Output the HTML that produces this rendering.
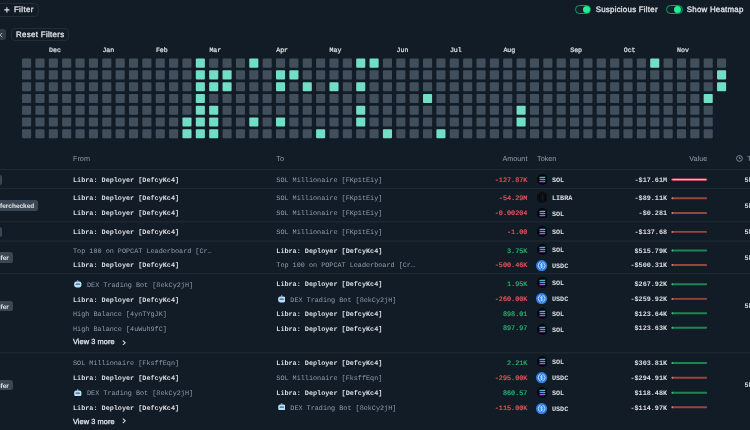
<!DOCTYPE html>
<html lang="en"><head><meta charset="utf-8"><title>Transfers</title>
<style>

html,body{margin:0;padding:0;}
body{text-rendering:geometricPrecision;width:750px;height:430px;overflow:hidden;background:#121c27;position:relative;font-family:"Liberation Sans",sans-serif;color:#e3e6ea;}
#root{position:absolute;left:0;top:0;width:750px;height:430px;filter:blur(0.32px);}
.a{position:absolute;white-space:nowrap;}
.m{font-family:"Liberation Mono",monospace;font-size:6.8px;line-height:10px;height:10px;}
.b{font-weight:bold;color:#e3e6ea;}
.m.b{color:#dadee3;}
.g{color:#929daa;}
.r{color:#f0595c;-webkit-text-stroke:0.18px #f0595c;}
.gr{color:#2db672;-webkit-text-stroke:0.18px #2db672;}
.s{font-family:"Liberation Sans",sans-serif;}
.c{position:absolute;width:9.1px;height:9.05px;border-radius:0.9px;background:#414f5d;}
.c.t{background:#72dec5;}
.hl{position:absolute;left:0;width:750px;height:1px;background:#212b36;}
.btn{position:absolute;box-sizing:border-box;border:1px solid #222d38;border-radius:4px;font-weight:bold;color:#e3e6ea;}
.tag{position:absolute;box-sizing:border-box;background:#3a4653;border-radius:2.5px;height:10.4px;line-height:10.4px;font-size:6.5px;font-weight:bold;color:#e3e6ea;white-space:nowrap;padding:0 4.1px;overflow:hidden;min-width:12px;}
.tg{position:absolute;box-sizing:border-box;width:16.3px;height:9.4px;border:1.2px solid #1b9a62;border-radius:5px;background:#14212a;}
.tg i{position:absolute;right:0.3px;top:-0.2px;width:7.4px;height:7.4px;border-radius:50%;background:#1ff096;}
.t1{font-size:7.9px;line-height:12px;font-weight:normal;-webkit-text-stroke:0.28px #e3e6ea;}
.bar{position:absolute;height:2.6px;border-radius:1.3px;width:35.8px;left:671.5px;}
.bar b{position:absolute;left:1px;right:1px;top:0.9px;height:0.8px;background:#fcc3c3;border-radius:1px;}
.ic{position:absolute;width:10.8px;height:10.8px;}

</style></head><body><div id="root">
<svg width="0" height="0" style="position:absolute"><defs><linearGradient id="s1" x1="0" y1="0" x2="1" y2="0"><stop offset="0" stop-color="#4a9fd0"/><stop offset="1" stop-color="#2fe3b0"/></linearGradient><linearGradient id="s2" x1="0" y1="0" x2="1" y2="0"><stop offset="0" stop-color="#8672ea"/><stop offset="1" stop-color="#56b4dc"/></linearGradient><linearGradient id="s3" x1="0" y1="0" x2="1" y2="0"><stop offset="0" stop-color="#a848f2"/><stop offset="1" stop-color="#747ce8"/></linearGradient></defs></svg>
<div class="btn" style="left:-6px;top:3.2px;width:44.5px;height:13.4px;border-radius:4.5px;"></div>
<svg class="a" style="left:4.1px;top:7px" width="5.8" height="5.8" viewBox="0 0 10 10"><path d="M5 0.600V9.400M0.600 5H9.400" stroke="#e3e6ea" stroke-width="1.900" fill="none"/></svg>
<div class="a s b t1" style="left:13.9px;top:4.3px;letter-spacing:0.4px;">Filter</div>
<div class="tg" style="left:575px;top:5px;"><i></i></div>
<div class="a s b t1" style="left:595.7px;top:4.2px;font-size:7.9px;letter-spacing:0.25px;">Suspicious Filter</div>
<div class="tg" style="left:666.4px;top:5px;"><i></i></div>
<div class="a s b t1" style="left:686.8px;top:4.2px;font-size:7.9px;letter-spacing:0.24px;">Show Heatmap</div>
<div class="a" style="left:-6px;top:28.6px;width:11.9px;height:11.9px;background:#2d3946;border-radius:3px;"></div>
<svg class="a" style="left:-3.1px;top:31.5px" width="6.2" height="6.2" viewBox="0 0 10 10"><path d="M1.500 1.500L8.500 8.500M8.500 1.500L1.500 8.500" stroke="#b4bdc7" stroke-width="1.500" fill="none"/></svg>
<div class="btn" style="left:11.2px;top:27.8px;width:58.1px;height:13.3px;"></div>
<div class="a s b t1" style="left:16.1px;top:29.3px;letter-spacing:0.31px;">Reset Filters</div>
<div class="a m" style="left:49.0px;top:46.4px;font-size:6.6px;color:#dde1e6;-webkit-text-stroke:0.22px #dde1e6;">Dec</div>
<div class="a m" style="left:102.4px;top:46.4px;font-size:6.6px;color:#dde1e6;-webkit-text-stroke:0.22px #dde1e6;">Jan</div>
<div class="a m" style="left:155.9px;top:46.4px;font-size:6.6px;color:#dde1e6;-webkit-text-stroke:0.22px #dde1e6;">Feb</div>
<div class="a m" style="left:209.4px;top:46.4px;font-size:6.6px;color:#dde1e6;-webkit-text-stroke:0.22px #dde1e6;">Mar</div>
<div class="a m" style="left:276.2px;top:46.4px;font-size:6.6px;color:#dde1e6;-webkit-text-stroke:0.22px #dde1e6;">Apr</div>
<div class="a m" style="left:329.6px;top:46.4px;font-size:6.6px;color:#dde1e6;-webkit-text-stroke:0.22px #dde1e6;">May</div>
<div class="a m" style="left:396.5px;top:46.4px;font-size:6.6px;color:#dde1e6;-webkit-text-stroke:0.22px #dde1e6;">Jun</div>
<div class="a m" style="left:449.9px;top:46.4px;font-size:6.6px;color:#dde1e6;-webkit-text-stroke:0.22px #dde1e6;">Jul</div>
<div class="a m" style="left:503.4px;top:46.4px;font-size:6.6px;color:#dde1e6;-webkit-text-stroke:0.22px #dde1e6;">Aug</div>
<div class="a m" style="left:570.2px;top:46.4px;font-size:6.6px;color:#dde1e6;-webkit-text-stroke:0.22px #dde1e6;">Sep</div>
<div class="a m" style="left:623.7px;top:46.4px;font-size:6.6px;color:#dde1e6;-webkit-text-stroke:0.22px #dde1e6;">Oct</div>
<div class="a m" style="left:677.1px;top:46.4px;font-size:6.6px;color:#dde1e6;-webkit-text-stroke:0.22px #dde1e6;">Nov</div>
<svg class="a" style="left:0;top:0" width="750" height="145" viewBox="0 0 750 145"><rect x="22.05" y="58.60" width="9.1" height="9.05" rx="0.9" fill="#414f5d"/><rect x="22.05" y="70.37" width="9.1" height="9.05" rx="0.9" fill="#414f5d"/><rect x="22.05" y="82.14" width="9.1" height="9.05" rx="0.9" fill="#414f5d"/><rect x="22.05" y="93.91" width="9.1" height="9.05" rx="0.9" fill="#414f5d"/><rect x="22.05" y="105.68" width="9.1" height="9.05" rx="0.9" fill="#414f5d"/><rect x="22.05" y="117.45" width="9.1" height="9.05" rx="0.9" fill="#414f5d"/><rect x="22.05" y="129.22" width="9.1" height="9.05" rx="0.9" fill="#414f5d"/><rect x="35.41" y="58.60" width="9.1" height="9.05" rx="0.9" fill="#414f5d"/><rect x="35.41" y="70.37" width="9.1" height="9.05" rx="0.9" fill="#414f5d"/><rect x="35.41" y="82.14" width="9.1" height="9.05" rx="0.9" fill="#414f5d"/><rect x="35.41" y="93.91" width="9.1" height="9.05" rx="0.9" fill="#414f5d"/><rect x="35.41" y="105.68" width="9.1" height="9.05" rx="0.9" fill="#414f5d"/><rect x="35.41" y="117.45" width="9.1" height="9.05" rx="0.9" fill="#414f5d"/><rect x="35.41" y="129.22" width="9.1" height="9.05" rx="0.9" fill="#414f5d"/><rect x="48.78" y="58.60" width="9.1" height="9.05" rx="0.9" fill="#414f5d"/><rect x="48.78" y="70.37" width="9.1" height="9.05" rx="0.9" fill="#414f5d"/><rect x="48.78" y="82.14" width="9.1" height="9.05" rx="0.9" fill="#414f5d"/><rect x="48.78" y="93.91" width="9.1" height="9.05" rx="0.9" fill="#414f5d"/><rect x="48.78" y="105.68" width="9.1" height="9.05" rx="0.9" fill="#414f5d"/><rect x="48.78" y="117.45" width="9.1" height="9.05" rx="0.9" fill="#414f5d"/><rect x="48.78" y="129.22" width="9.1" height="9.05" rx="0.9" fill="#414f5d"/><rect x="62.14" y="58.60" width="9.1" height="9.05" rx="0.9" fill="#414f5d"/><rect x="62.14" y="70.37" width="9.1" height="9.05" rx="0.9" fill="#414f5d"/><rect x="62.14" y="82.14" width="9.1" height="9.05" rx="0.9" fill="#414f5d"/><rect x="62.14" y="93.91" width="9.1" height="9.05" rx="0.9" fill="#414f5d"/><rect x="62.14" y="105.68" width="9.1" height="9.05" rx="0.9" fill="#414f5d"/><rect x="62.14" y="117.45" width="9.1" height="9.05" rx="0.9" fill="#414f5d"/><rect x="62.14" y="129.22" width="9.1" height="9.05" rx="0.9" fill="#414f5d"/><rect x="75.51" y="58.60" width="9.1" height="9.05" rx="0.9" fill="#414f5d"/><rect x="75.51" y="70.37" width="9.1" height="9.05" rx="0.9" fill="#414f5d"/><rect x="75.51" y="82.14" width="9.1" height="9.05" rx="0.9" fill="#414f5d"/><rect x="75.51" y="93.91" width="9.1" height="9.05" rx="0.9" fill="#414f5d"/><rect x="75.51" y="105.68" width="9.1" height="9.05" rx="0.9" fill="#414f5d"/><rect x="75.51" y="117.45" width="9.1" height="9.05" rx="0.9" fill="#414f5d"/><rect x="75.51" y="129.22" width="9.1" height="9.05" rx="0.9" fill="#414f5d"/><rect x="88.88" y="58.60" width="9.1" height="9.05" rx="0.9" fill="#414f5d"/><rect x="88.88" y="70.37" width="9.1" height="9.05" rx="0.9" fill="#414f5d"/><rect x="88.88" y="82.14" width="9.1" height="9.05" rx="0.9" fill="#414f5d"/><rect x="88.88" y="93.91" width="9.1" height="9.05" rx="0.9" fill="#414f5d"/><rect x="88.88" y="105.68" width="9.1" height="9.05" rx="0.9" fill="#414f5d"/><rect x="88.88" y="117.45" width="9.1" height="9.05" rx="0.9" fill="#414f5d"/><rect x="88.88" y="129.22" width="9.1" height="9.05" rx="0.9" fill="#414f5d"/><rect x="102.24" y="58.60" width="9.1" height="9.05" rx="0.9" fill="#414f5d"/><rect x="102.24" y="70.37" width="9.1" height="9.05" rx="0.9" fill="#414f5d"/><rect x="102.24" y="82.14" width="9.1" height="9.05" rx="0.9" fill="#414f5d"/><rect x="102.24" y="93.91" width="9.1" height="9.05" rx="0.9" fill="#414f5d"/><rect x="102.24" y="105.68" width="9.1" height="9.05" rx="0.9" fill="#414f5d"/><rect x="102.24" y="117.45" width="9.1" height="9.05" rx="0.9" fill="#414f5d"/><rect x="102.24" y="129.22" width="9.1" height="9.05" rx="0.9" fill="#414f5d"/><rect x="115.61" y="58.60" width="9.1" height="9.05" rx="0.9" fill="#414f5d"/><rect x="115.61" y="70.37" width="9.1" height="9.05" rx="0.9" fill="#414f5d"/><rect x="115.61" y="82.14" width="9.1" height="9.05" rx="0.9" fill="#414f5d"/><rect x="115.61" y="93.91" width="9.1" height="9.05" rx="0.9" fill="#414f5d"/><rect x="115.61" y="105.68" width="9.1" height="9.05" rx="0.9" fill="#414f5d"/><rect x="115.61" y="117.45" width="9.1" height="9.05" rx="0.9" fill="#414f5d"/><rect x="115.61" y="129.22" width="9.1" height="9.05" rx="0.9" fill="#414f5d"/><rect x="128.97" y="58.60" width="9.1" height="9.05" rx="0.9" fill="#414f5d"/><rect x="128.97" y="70.37" width="9.1" height="9.05" rx="0.9" fill="#414f5d"/><rect x="128.97" y="82.14" width="9.1" height="9.05" rx="0.9" fill="#414f5d"/><rect x="128.97" y="93.91" width="9.1" height="9.05" rx="0.9" fill="#414f5d"/><rect x="128.97" y="105.68" width="9.1" height="9.05" rx="0.9" fill="#414f5d"/><rect x="128.97" y="117.45" width="9.1" height="9.05" rx="0.9" fill="#414f5d"/><rect x="128.97" y="129.22" width="9.1" height="9.05" rx="0.9" fill="#414f5d"/><rect x="142.34" y="58.60" width="9.1" height="9.05" rx="0.9" fill="#414f5d"/><rect x="142.34" y="70.37" width="9.1" height="9.05" rx="0.9" fill="#414f5d"/><rect x="142.34" y="82.14" width="9.1" height="9.05" rx="0.9" fill="#414f5d"/><rect x="142.34" y="93.91" width="9.1" height="9.05" rx="0.9" fill="#414f5d"/><rect x="142.34" y="105.68" width="9.1" height="9.05" rx="0.9" fill="#414f5d"/><rect x="142.34" y="117.45" width="9.1" height="9.05" rx="0.9" fill="#414f5d"/><rect x="142.34" y="129.22" width="9.1" height="9.05" rx="0.9" fill="#414f5d"/><rect x="155.70" y="58.60" width="9.1" height="9.05" rx="0.9" fill="#414f5d"/><rect x="155.70" y="70.37" width="9.1" height="9.05" rx="0.9" fill="#414f5d"/><rect x="155.70" y="82.14" width="9.1" height="9.05" rx="0.9" fill="#414f5d"/><rect x="155.70" y="93.91" width="9.1" height="9.05" rx="0.9" fill="#414f5d"/><rect x="155.70" y="105.68" width="9.1" height="9.05" rx="0.9" fill="#414f5d"/><rect x="155.70" y="117.45" width="9.1" height="9.05" rx="0.9" fill="#414f5d"/><rect x="155.70" y="129.22" width="9.1" height="9.05" rx="0.9" fill="#414f5d"/><rect x="169.07" y="58.60" width="9.1" height="9.05" rx="0.9" fill="#414f5d"/><rect x="169.07" y="70.37" width="9.1" height="9.05" rx="0.9" fill="#414f5d"/><rect x="169.07" y="82.14" width="9.1" height="9.05" rx="0.9" fill="#414f5d"/><rect x="169.07" y="93.91" width="9.1" height="9.05" rx="0.9" fill="#414f5d"/><rect x="169.07" y="105.68" width="9.1" height="9.05" rx="0.9" fill="#414f5d"/><rect x="169.07" y="117.45" width="9.1" height="9.05" rx="0.9" fill="#414f5d"/><rect x="169.07" y="129.22" width="9.1" height="9.05" rx="0.9" fill="#414f5d"/><rect x="182.43" y="58.60" width="9.1" height="9.05" rx="0.9" fill="#414f5d"/><rect x="182.43" y="70.37" width="9.1" height="9.05" rx="0.9" fill="#414f5d"/><rect x="182.43" y="82.14" width="9.1" height="9.05" rx="0.9" fill="#414f5d"/><rect x="182.43" y="93.91" width="9.1" height="9.05" rx="0.9" fill="#414f5d"/><rect x="182.43" y="105.68" width="9.1" height="9.05" rx="0.9" fill="#414f5d"/><rect x="182.43" y="117.45" width="9.1" height="9.05" rx="0.9" fill="#72dec5"/><rect x="182.43" y="129.22" width="9.1" height="9.05" rx="0.9" fill="#72dec5"/><rect x="195.80" y="58.60" width="9.1" height="9.05" rx="0.9" fill="#72dec5"/><rect x="195.80" y="70.37" width="9.1" height="9.05" rx="0.9" fill="#72dec5"/><rect x="195.80" y="82.14" width="9.1" height="9.05" rx="0.9" fill="#72dec5"/><rect x="195.80" y="93.91" width="9.1" height="9.05" rx="0.9" fill="#72dec5"/><rect x="195.80" y="105.68" width="9.1" height="9.05" rx="0.9" fill="#72dec5"/><rect x="195.80" y="117.45" width="9.1" height="9.05" rx="0.9" fill="#72dec5"/><rect x="195.80" y="129.22" width="9.1" height="9.05" rx="0.9" fill="#72dec5"/><rect x="209.16" y="58.60" width="9.1" height="9.05" rx="0.9" fill="#414f5d"/><rect x="209.16" y="70.37" width="9.1" height="9.05" rx="0.9" fill="#72dec5"/><rect x="209.16" y="82.14" width="9.1" height="9.05" rx="0.9" fill="#72dec5"/><rect x="209.16" y="93.91" width="9.1" height="9.05" rx="0.9" fill="#414f5d"/><rect x="209.16" y="105.68" width="9.1" height="9.05" rx="0.9" fill="#72dec5"/><rect x="209.16" y="117.45" width="9.1" height="9.05" rx="0.9" fill="#72dec5"/><rect x="209.16" y="129.22" width="9.1" height="9.05" rx="0.9" fill="#72dec5"/><rect x="222.53" y="58.60" width="9.1" height="9.05" rx="0.9" fill="#414f5d"/><rect x="222.53" y="70.37" width="9.1" height="9.05" rx="0.9" fill="#72dec5"/><rect x="222.53" y="82.14" width="9.1" height="9.05" rx="0.9" fill="#72dec5"/><rect x="222.53" y="93.91" width="9.1" height="9.05" rx="0.9" fill="#414f5d"/><rect x="222.53" y="105.68" width="9.1" height="9.05" rx="0.9" fill="#414f5d"/><rect x="222.53" y="117.45" width="9.1" height="9.05" rx="0.9" fill="#414f5d"/><rect x="222.53" y="129.22" width="9.1" height="9.05" rx="0.9" fill="#414f5d"/><rect x="235.89" y="58.60" width="9.1" height="9.05" rx="0.9" fill="#414f5d"/><rect x="235.89" y="70.37" width="9.1" height="9.05" rx="0.9" fill="#414f5d"/><rect x="235.89" y="82.14" width="9.1" height="9.05" rx="0.9" fill="#414f5d"/><rect x="235.89" y="93.91" width="9.1" height="9.05" rx="0.9" fill="#414f5d"/><rect x="235.89" y="105.68" width="9.1" height="9.05" rx="0.9" fill="#414f5d"/><rect x="235.89" y="117.45" width="9.1" height="9.05" rx="0.9" fill="#414f5d"/><rect x="235.89" y="129.22" width="9.1" height="9.05" rx="0.9" fill="#414f5d"/><rect x="249.26" y="58.60" width="9.1" height="9.05" rx="0.9" fill="#72dec5"/><rect x="249.26" y="70.37" width="9.1" height="9.05" rx="0.9" fill="#414f5d"/><rect x="249.26" y="82.14" width="9.1" height="9.05" rx="0.9" fill="#414f5d"/><rect x="249.26" y="93.91" width="9.1" height="9.05" rx="0.9" fill="#414f5d"/><rect x="249.26" y="105.68" width="9.1" height="9.05" rx="0.9" fill="#414f5d"/><rect x="249.26" y="117.45" width="9.1" height="9.05" rx="0.9" fill="#72dec5"/><rect x="249.26" y="129.22" width="9.1" height="9.05" rx="0.9" fill="#414f5d"/><rect x="262.62" y="58.60" width="9.1" height="9.05" rx="0.9" fill="#414f5d"/><rect x="262.62" y="70.37" width="9.1" height="9.05" rx="0.9" fill="#414f5d"/><rect x="262.62" y="82.14" width="9.1" height="9.05" rx="0.9" fill="#414f5d"/><rect x="262.62" y="93.91" width="9.1" height="9.05" rx="0.9" fill="#414f5d"/><rect x="262.62" y="105.68" width="9.1" height="9.05" rx="0.9" fill="#414f5d"/><rect x="262.62" y="117.45" width="9.1" height="9.05" rx="0.9" fill="#414f5d"/><rect x="262.62" y="129.22" width="9.1" height="9.05" rx="0.9" fill="#414f5d"/><rect x="275.99" y="58.60" width="9.1" height="9.05" rx="0.9" fill="#414f5d"/><rect x="275.99" y="70.37" width="9.1" height="9.05" rx="0.9" fill="#72dec5"/><rect x="275.99" y="82.14" width="9.1" height="9.05" rx="0.9" fill="#72dec5"/><rect x="275.99" y="93.91" width="9.1" height="9.05" rx="0.9" fill="#414f5d"/><rect x="275.99" y="105.68" width="9.1" height="9.05" rx="0.9" fill="#414f5d"/><rect x="275.99" y="117.45" width="9.1" height="9.05" rx="0.9" fill="#72dec5"/><rect x="275.99" y="129.22" width="9.1" height="9.05" rx="0.9" fill="#414f5d"/><rect x="289.35" y="58.60" width="9.1" height="9.05" rx="0.9" fill="#414f5d"/><rect x="289.35" y="70.37" width="9.1" height="9.05" rx="0.9" fill="#72dec5"/><rect x="289.35" y="82.14" width="9.1" height="9.05" rx="0.9" fill="#414f5d"/><rect x="289.35" y="93.91" width="9.1" height="9.05" rx="0.9" fill="#414f5d"/><rect x="289.35" y="105.68" width="9.1" height="9.05" rx="0.9" fill="#414f5d"/><rect x="289.35" y="117.45" width="9.1" height="9.05" rx="0.9" fill="#414f5d"/><rect x="289.35" y="129.22" width="9.1" height="9.05" rx="0.9" fill="#414f5d"/><rect x="302.72" y="58.60" width="9.1" height="9.05" rx="0.9" fill="#414f5d"/><rect x="302.72" y="70.37" width="9.1" height="9.05" rx="0.9" fill="#414f5d"/><rect x="302.72" y="82.14" width="9.1" height="9.05" rx="0.9" fill="#72dec5"/><rect x="302.72" y="93.91" width="9.1" height="9.05" rx="0.9" fill="#414f5d"/><rect x="302.72" y="105.68" width="9.1" height="9.05" rx="0.9" fill="#414f5d"/><rect x="302.72" y="117.45" width="9.1" height="9.05" rx="0.9" fill="#414f5d"/><rect x="302.72" y="129.22" width="9.1" height="9.05" rx="0.9" fill="#414f5d"/><rect x="316.08" y="58.60" width="9.1" height="9.05" rx="0.9" fill="#414f5d"/><rect x="316.08" y="70.37" width="9.1" height="9.05" rx="0.9" fill="#414f5d"/><rect x="316.08" y="82.14" width="9.1" height="9.05" rx="0.9" fill="#414f5d"/><rect x="316.08" y="93.91" width="9.1" height="9.05" rx="0.9" fill="#414f5d"/><rect x="316.08" y="105.68" width="9.1" height="9.05" rx="0.9" fill="#414f5d"/><rect x="316.08" y="117.45" width="9.1" height="9.05" rx="0.9" fill="#414f5d"/><rect x="316.08" y="129.22" width="9.1" height="9.05" rx="0.9" fill="#72dec5"/><rect x="329.44" y="58.60" width="9.1" height="9.05" rx="0.9" fill="#414f5d"/><rect x="329.44" y="70.37" width="9.1" height="9.05" rx="0.9" fill="#414f5d"/><rect x="329.44" y="82.14" width="9.1" height="9.05" rx="0.9" fill="#72dec5"/><rect x="329.44" y="93.91" width="9.1" height="9.05" rx="0.9" fill="#414f5d"/><rect x="329.44" y="105.68" width="9.1" height="9.05" rx="0.9" fill="#414f5d"/><rect x="329.44" y="117.45" width="9.1" height="9.05" rx="0.9" fill="#414f5d"/><rect x="329.44" y="129.22" width="9.1" height="9.05" rx="0.9" fill="#414f5d"/><rect x="342.81" y="58.60" width="9.1" height="9.05" rx="0.9" fill="#414f5d"/><rect x="342.81" y="70.37" width="9.1" height="9.05" rx="0.9" fill="#414f5d"/><rect x="342.81" y="82.14" width="9.1" height="9.05" rx="0.9" fill="#414f5d"/><rect x="342.81" y="93.91" width="9.1" height="9.05" rx="0.9" fill="#414f5d"/><rect x="342.81" y="105.68" width="9.1" height="9.05" rx="0.9" fill="#414f5d"/><rect x="342.81" y="117.45" width="9.1" height="9.05" rx="0.9" fill="#414f5d"/><rect x="342.81" y="129.22" width="9.1" height="9.05" rx="0.9" fill="#414f5d"/><rect x="356.18" y="58.60" width="9.1" height="9.05" rx="0.9" fill="#72dec5"/><rect x="356.18" y="70.37" width="9.1" height="9.05" rx="0.9" fill="#414f5d"/><rect x="356.18" y="82.14" width="9.1" height="9.05" rx="0.9" fill="#72dec5"/><rect x="356.18" y="93.91" width="9.1" height="9.05" rx="0.9" fill="#414f5d"/><rect x="356.18" y="105.68" width="9.1" height="9.05" rx="0.9" fill="#72dec5"/><rect x="356.18" y="117.45" width="9.1" height="9.05" rx="0.9" fill="#72dec5"/><rect x="356.18" y="129.22" width="9.1" height="9.05" rx="0.9" fill="#414f5d"/><rect x="369.54" y="58.60" width="9.1" height="9.05" rx="0.9" fill="#72dec5"/><rect x="369.54" y="70.37" width="9.1" height="9.05" rx="0.9" fill="#414f5d"/><rect x="369.54" y="82.14" width="9.1" height="9.05" rx="0.9" fill="#414f5d"/><rect x="369.54" y="93.91" width="9.1" height="9.05" rx="0.9" fill="#414f5d"/><rect x="369.54" y="105.68" width="9.1" height="9.05" rx="0.9" fill="#414f5d"/><rect x="369.54" y="117.45" width="9.1" height="9.05" rx="0.9" fill="#414f5d"/><rect x="369.54" y="129.22" width="9.1" height="9.05" rx="0.9" fill="#414f5d"/><rect x="382.91" y="58.60" width="9.1" height="9.05" rx="0.9" fill="#414f5d"/><rect x="382.91" y="70.37" width="9.1" height="9.05" rx="0.9" fill="#414f5d"/><rect x="382.91" y="82.14" width="9.1" height="9.05" rx="0.9" fill="#414f5d"/><rect x="382.91" y="93.91" width="9.1" height="9.05" rx="0.9" fill="#414f5d"/><rect x="382.91" y="105.68" width="9.1" height="9.05" rx="0.9" fill="#414f5d"/><rect x="382.91" y="117.45" width="9.1" height="9.05" rx="0.9" fill="#414f5d"/><rect x="382.91" y="129.22" width="9.1" height="9.05" rx="0.9" fill="#72dec5"/><rect x="396.27" y="58.60" width="9.1" height="9.05" rx="0.9" fill="#414f5d"/><rect x="396.27" y="70.37" width="9.1" height="9.05" rx="0.9" fill="#414f5d"/><rect x="396.27" y="82.14" width="9.1" height="9.05" rx="0.9" fill="#414f5d"/><rect x="396.27" y="93.91" width="9.1" height="9.05" rx="0.9" fill="#414f5d"/><rect x="396.27" y="105.68" width="9.1" height="9.05" rx="0.9" fill="#414f5d"/><rect x="396.27" y="117.45" width="9.1" height="9.05" rx="0.9" fill="#414f5d"/><rect x="396.27" y="129.22" width="9.1" height="9.05" rx="0.9" fill="#414f5d"/><rect x="409.63" y="58.60" width="9.1" height="9.05" rx="0.9" fill="#414f5d"/><rect x="409.63" y="70.37" width="9.1" height="9.05" rx="0.9" fill="#414f5d"/><rect x="409.63" y="82.14" width="9.1" height="9.05" rx="0.9" fill="#414f5d"/><rect x="409.63" y="93.91" width="9.1" height="9.05" rx="0.9" fill="#414f5d"/><rect x="409.63" y="105.68" width="9.1" height="9.05" rx="0.9" fill="#414f5d"/><rect x="409.63" y="117.45" width="9.1" height="9.05" rx="0.9" fill="#414f5d"/><rect x="409.63" y="129.22" width="9.1" height="9.05" rx="0.9" fill="#414f5d"/><rect x="423.00" y="58.60" width="9.1" height="9.05" rx="0.9" fill="#414f5d"/><rect x="423.00" y="70.37" width="9.1" height="9.05" rx="0.9" fill="#414f5d"/><rect x="423.00" y="82.14" width="9.1" height="9.05" rx="0.9" fill="#414f5d"/><rect x="423.00" y="93.91" width="9.1" height="9.05" rx="0.9" fill="#72dec5"/><rect x="423.00" y="105.68" width="9.1" height="9.05" rx="0.9" fill="#414f5d"/><rect x="423.00" y="117.45" width="9.1" height="9.05" rx="0.9" fill="#414f5d"/><rect x="423.00" y="129.22" width="9.1" height="9.05" rx="0.9" fill="#414f5d"/><rect x="436.37" y="58.60" width="9.1" height="9.05" rx="0.9" fill="#414f5d"/><rect x="436.37" y="70.37" width="9.1" height="9.05" rx="0.9" fill="#414f5d"/><rect x="436.37" y="82.14" width="9.1" height="9.05" rx="0.9" fill="#414f5d"/><rect x="436.37" y="93.91" width="9.1" height="9.05" rx="0.9" fill="#414f5d"/><rect x="436.37" y="105.68" width="9.1" height="9.05" rx="0.9" fill="#414f5d"/><rect x="436.37" y="117.45" width="9.1" height="9.05" rx="0.9" fill="#414f5d"/><rect x="436.37" y="129.22" width="9.1" height="9.05" rx="0.9" fill="#72dec5"/><rect x="449.73" y="58.60" width="9.1" height="9.05" rx="0.9" fill="#414f5d"/><rect x="449.73" y="70.37" width="9.1" height="9.05" rx="0.9" fill="#414f5d"/><rect x="449.73" y="82.14" width="9.1" height="9.05" rx="0.9" fill="#414f5d"/><rect x="449.73" y="93.91" width="9.1" height="9.05" rx="0.9" fill="#414f5d"/><rect x="449.73" y="105.68" width="9.1" height="9.05" rx="0.9" fill="#414f5d"/><rect x="449.73" y="117.45" width="9.1" height="9.05" rx="0.9" fill="#414f5d"/><rect x="449.73" y="129.22" width="9.1" height="9.05" rx="0.9" fill="#414f5d"/><rect x="463.10" y="58.60" width="9.1" height="9.05" rx="0.9" fill="#414f5d"/><rect x="463.10" y="70.37" width="9.1" height="9.05" rx="0.9" fill="#414f5d"/><rect x="463.10" y="82.14" width="9.1" height="9.05" rx="0.9" fill="#414f5d"/><rect x="463.10" y="93.91" width="9.1" height="9.05" rx="0.9" fill="#414f5d"/><rect x="463.10" y="105.68" width="9.1" height="9.05" rx="0.9" fill="#414f5d"/><rect x="463.10" y="117.45" width="9.1" height="9.05" rx="0.9" fill="#414f5d"/><rect x="463.10" y="129.22" width="9.1" height="9.05" rx="0.9" fill="#414f5d"/><rect x="476.46" y="58.60" width="9.1" height="9.05" rx="0.9" fill="#414f5d"/><rect x="476.46" y="70.37" width="9.1" height="9.05" rx="0.9" fill="#414f5d"/><rect x="476.46" y="82.14" width="9.1" height="9.05" rx="0.9" fill="#414f5d"/><rect x="476.46" y="93.91" width="9.1" height="9.05" rx="0.9" fill="#414f5d"/><rect x="476.46" y="105.68" width="9.1" height="9.05" rx="0.9" fill="#414f5d"/><rect x="476.46" y="117.45" width="9.1" height="9.05" rx="0.9" fill="#414f5d"/><rect x="476.46" y="129.22" width="9.1" height="9.05" rx="0.9" fill="#414f5d"/><rect x="489.83" y="58.60" width="9.1" height="9.05" rx="0.9" fill="#414f5d"/><rect x="489.83" y="70.37" width="9.1" height="9.05" rx="0.9" fill="#414f5d"/><rect x="489.83" y="82.14" width="9.1" height="9.05" rx="0.9" fill="#414f5d"/><rect x="489.83" y="93.91" width="9.1" height="9.05" rx="0.9" fill="#414f5d"/><rect x="489.83" y="105.68" width="9.1" height="9.05" rx="0.9" fill="#414f5d"/><rect x="489.83" y="117.45" width="9.1" height="9.05" rx="0.9" fill="#414f5d"/><rect x="489.83" y="129.22" width="9.1" height="9.05" rx="0.9" fill="#414f5d"/><rect x="503.19" y="58.60" width="9.1" height="9.05" rx="0.9" fill="#414f5d"/><rect x="503.19" y="70.37" width="9.1" height="9.05" rx="0.9" fill="#414f5d"/><rect x="503.19" y="82.14" width="9.1" height="9.05" rx="0.9" fill="#414f5d"/><rect x="503.19" y="93.91" width="9.1" height="9.05" rx="0.9" fill="#414f5d"/><rect x="503.19" y="105.68" width="9.1" height="9.05" rx="0.9" fill="#414f5d"/><rect x="503.19" y="117.45" width="9.1" height="9.05" rx="0.9" fill="#414f5d"/><rect x="503.19" y="129.22" width="9.1" height="9.05" rx="0.9" fill="#414f5d"/><rect x="516.55" y="58.60" width="9.1" height="9.05" rx="0.9" fill="#414f5d"/><rect x="516.55" y="70.37" width="9.1" height="9.05" rx="0.9" fill="#414f5d"/><rect x="516.55" y="82.14" width="9.1" height="9.05" rx="0.9" fill="#414f5d"/><rect x="516.55" y="93.91" width="9.1" height="9.05" rx="0.9" fill="#414f5d"/><rect x="516.55" y="105.68" width="9.1" height="9.05" rx="0.9" fill="#72dec5"/><rect x="516.55" y="117.45" width="9.1" height="9.05" rx="0.9" fill="#72dec5"/><rect x="516.55" y="129.22" width="9.1" height="9.05" rx="0.9" fill="#414f5d"/><rect x="529.92" y="58.60" width="9.1" height="9.05" rx="0.9" fill="#414f5d"/><rect x="529.92" y="70.37" width="9.1" height="9.05" rx="0.9" fill="#414f5d"/><rect x="529.92" y="82.14" width="9.1" height="9.05" rx="0.9" fill="#414f5d"/><rect x="529.92" y="93.91" width="9.1" height="9.05" rx="0.9" fill="#414f5d"/><rect x="529.92" y="105.68" width="9.1" height="9.05" rx="0.9" fill="#414f5d"/><rect x="529.92" y="117.45" width="9.1" height="9.05" rx="0.9" fill="#414f5d"/><rect x="529.92" y="129.22" width="9.1" height="9.05" rx="0.9" fill="#414f5d"/><rect x="543.28" y="58.60" width="9.1" height="9.05" rx="0.9" fill="#414f5d"/><rect x="543.28" y="70.37" width="9.1" height="9.05" rx="0.9" fill="#414f5d"/><rect x="543.28" y="82.14" width="9.1" height="9.05" rx="0.9" fill="#414f5d"/><rect x="543.28" y="93.91" width="9.1" height="9.05" rx="0.9" fill="#414f5d"/><rect x="543.28" y="105.68" width="9.1" height="9.05" rx="0.9" fill="#414f5d"/><rect x="543.28" y="117.45" width="9.1" height="9.05" rx="0.9" fill="#414f5d"/><rect x="543.28" y="129.22" width="9.1" height="9.05" rx="0.9" fill="#414f5d"/><rect x="556.65" y="58.60" width="9.1" height="9.05" rx="0.9" fill="#414f5d"/><rect x="556.65" y="70.37" width="9.1" height="9.05" rx="0.9" fill="#414f5d"/><rect x="556.65" y="82.14" width="9.1" height="9.05" rx="0.9" fill="#414f5d"/><rect x="556.65" y="93.91" width="9.1" height="9.05" rx="0.9" fill="#414f5d"/><rect x="556.65" y="105.68" width="9.1" height="9.05" rx="0.9" fill="#414f5d"/><rect x="556.65" y="117.45" width="9.1" height="9.05" rx="0.9" fill="#414f5d"/><rect x="556.65" y="129.22" width="9.1" height="9.05" rx="0.9" fill="#414f5d"/><rect x="570.01" y="58.60" width="9.1" height="9.05" rx="0.9" fill="#414f5d"/><rect x="570.01" y="70.37" width="9.1" height="9.05" rx="0.9" fill="#414f5d"/><rect x="570.01" y="82.14" width="9.1" height="9.05" rx="0.9" fill="#414f5d"/><rect x="570.01" y="93.91" width="9.1" height="9.05" rx="0.9" fill="#414f5d"/><rect x="570.01" y="105.68" width="9.1" height="9.05" rx="0.9" fill="#414f5d"/><rect x="570.01" y="117.45" width="9.1" height="9.05" rx="0.9" fill="#414f5d"/><rect x="570.01" y="129.22" width="9.1" height="9.05" rx="0.9" fill="#414f5d"/><rect x="583.38" y="58.60" width="9.1" height="9.05" rx="0.9" fill="#414f5d"/><rect x="583.38" y="70.37" width="9.1" height="9.05" rx="0.9" fill="#414f5d"/><rect x="583.38" y="82.14" width="9.1" height="9.05" rx="0.9" fill="#414f5d"/><rect x="583.38" y="93.91" width="9.1" height="9.05" rx="0.9" fill="#414f5d"/><rect x="583.38" y="105.68" width="9.1" height="9.05" rx="0.9" fill="#414f5d"/><rect x="583.38" y="117.45" width="9.1" height="9.05" rx="0.9" fill="#414f5d"/><rect x="583.38" y="129.22" width="9.1" height="9.05" rx="0.9" fill="#414f5d"/><rect x="596.75" y="58.60" width="9.1" height="9.05" rx="0.9" fill="#414f5d"/><rect x="596.75" y="70.37" width="9.1" height="9.05" rx="0.9" fill="#414f5d"/><rect x="596.75" y="82.14" width="9.1" height="9.05" rx="0.9" fill="#414f5d"/><rect x="596.75" y="93.91" width="9.1" height="9.05" rx="0.9" fill="#414f5d"/><rect x="596.75" y="105.68" width="9.1" height="9.05" rx="0.9" fill="#414f5d"/><rect x="596.75" y="117.45" width="9.1" height="9.05" rx="0.9" fill="#414f5d"/><rect x="596.75" y="129.22" width="9.1" height="9.05" rx="0.9" fill="#414f5d"/><rect x="610.11" y="58.60" width="9.1" height="9.05" rx="0.9" fill="#414f5d"/><rect x="610.11" y="70.37" width="9.1" height="9.05" rx="0.9" fill="#414f5d"/><rect x="610.11" y="82.14" width="9.1" height="9.05" rx="0.9" fill="#414f5d"/><rect x="610.11" y="93.91" width="9.1" height="9.05" rx="0.9" fill="#414f5d"/><rect x="610.11" y="105.68" width="9.1" height="9.05" rx="0.9" fill="#414f5d"/><rect x="610.11" y="117.45" width="9.1" height="9.05" rx="0.9" fill="#414f5d"/><rect x="610.11" y="129.22" width="9.1" height="9.05" rx="0.9" fill="#414f5d"/><rect x="623.47" y="58.60" width="9.1" height="9.05" rx="0.9" fill="#414f5d"/><rect x="623.47" y="70.37" width="9.1" height="9.05" rx="0.9" fill="#414f5d"/><rect x="623.47" y="82.14" width="9.1" height="9.05" rx="0.9" fill="#414f5d"/><rect x="623.47" y="93.91" width="9.1" height="9.05" rx="0.9" fill="#414f5d"/><rect x="623.47" y="105.68" width="9.1" height="9.05" rx="0.9" fill="#414f5d"/><rect x="623.47" y="117.45" width="9.1" height="9.05" rx="0.9" fill="#414f5d"/><rect x="623.47" y="129.22" width="9.1" height="9.05" rx="0.9" fill="#414f5d"/><rect x="636.84" y="58.60" width="9.1" height="9.05" rx="0.9" fill="#414f5d"/><rect x="636.84" y="70.37" width="9.1" height="9.05" rx="0.9" fill="#414f5d"/><rect x="636.84" y="82.14" width="9.1" height="9.05" rx="0.9" fill="#414f5d"/><rect x="636.84" y="93.91" width="9.1" height="9.05" rx="0.9" fill="#414f5d"/><rect x="636.84" y="105.68" width="9.1" height="9.05" rx="0.9" fill="#414f5d"/><rect x="636.84" y="117.45" width="9.1" height="9.05" rx="0.9" fill="#414f5d"/><rect x="636.84" y="129.22" width="9.1" height="9.05" rx="0.9" fill="#414f5d"/><rect x="650.20" y="58.60" width="9.1" height="9.05" rx="0.9" fill="#72dec5"/><rect x="650.20" y="70.37" width="9.1" height="9.05" rx="0.9" fill="#414f5d"/><rect x="650.20" y="82.14" width="9.1" height="9.05" rx="0.9" fill="#414f5d"/><rect x="650.20" y="93.91" width="9.1" height="9.05" rx="0.9" fill="#414f5d"/><rect x="650.20" y="105.68" width="9.1" height="9.05" rx="0.9" fill="#414f5d"/><rect x="650.20" y="117.45" width="9.1" height="9.05" rx="0.9" fill="#414f5d"/><rect x="650.20" y="129.22" width="9.1" height="9.05" rx="0.9" fill="#414f5d"/><rect x="663.57" y="58.60" width="9.1" height="9.05" rx="0.9" fill="#414f5d"/><rect x="663.57" y="70.37" width="9.1" height="9.05" rx="0.9" fill="#414f5d"/><rect x="663.57" y="82.14" width="9.1" height="9.05" rx="0.9" fill="#414f5d"/><rect x="663.57" y="93.91" width="9.1" height="9.05" rx="0.9" fill="#414f5d"/><rect x="663.57" y="105.68" width="9.1" height="9.05" rx="0.9" fill="#414f5d"/><rect x="663.57" y="117.45" width="9.1" height="9.05" rx="0.9" fill="#414f5d"/><rect x="663.57" y="129.22" width="9.1" height="9.05" rx="0.9" fill="#414f5d"/><rect x="676.93" y="58.60" width="9.1" height="9.05" rx="0.9" fill="#414f5d"/><rect x="676.93" y="70.37" width="9.1" height="9.05" rx="0.9" fill="#414f5d"/><rect x="676.93" y="82.14" width="9.1" height="9.05" rx="0.9" fill="#414f5d"/><rect x="676.93" y="93.91" width="9.1" height="9.05" rx="0.9" fill="#414f5d"/><rect x="676.93" y="105.68" width="9.1" height="9.05" rx="0.9" fill="#414f5d"/><rect x="676.93" y="117.45" width="9.1" height="9.05" rx="0.9" fill="#414f5d"/><rect x="676.93" y="129.22" width="9.1" height="9.05" rx="0.9" fill="#414f5d"/><rect x="690.30" y="58.60" width="9.1" height="9.05" rx="0.9" fill="#414f5d"/><rect x="690.30" y="70.37" width="9.1" height="9.05" rx="0.9" fill="#414f5d"/><rect x="690.30" y="82.14" width="9.1" height="9.05" rx="0.9" fill="#414f5d"/><rect x="690.30" y="93.91" width="9.1" height="9.05" rx="0.9" fill="#414f5d"/><rect x="690.30" y="105.68" width="9.1" height="9.05" rx="0.9" fill="#414f5d"/><rect x="690.30" y="117.45" width="9.1" height="9.05" rx="0.9" fill="#414f5d"/><rect x="690.30" y="129.22" width="9.1" height="9.05" rx="0.9" fill="#414f5d"/><rect x="703.66" y="58.60" width="9.1" height="9.05" rx="0.9" fill="#414f5d"/><rect x="703.66" y="70.37" width="9.1" height="9.05" rx="0.9" fill="#414f5d"/><rect x="703.66" y="82.14" width="9.1" height="9.05" rx="0.9" fill="#414f5d"/><rect x="703.66" y="93.91" width="9.1" height="9.05" rx="0.9" fill="#72dec5"/><rect x="703.66" y="105.68" width="9.1" height="9.05" rx="0.9" fill="#414f5d"/><rect x="703.66" y="117.45" width="9.1" height="9.05" rx="0.9" fill="#414f5d"/><rect x="703.66" y="129.22" width="9.1" height="9.05" rx="0.9" fill="#414f5d"/><rect x="717.03" y="58.60" width="9.1" height="9.05" rx="0.9" fill="#414f5d"/><rect x="717.03" y="70.37" width="9.1" height="9.05" rx="0.9" fill="#72dec5"/><rect x="717.03" y="82.14" width="9.1" height="9.05" rx="0.9" fill="#72dec5"/></svg>
<div class="a s g" style="left:73px;top:154.2px;font-size:7.25px;line-height:10px;">From</div>
<div class="a s g" style="left:276.3px;top:154.2px;font-size:7.25px;line-height:10px;">To</div>
<div class="a s g" style="right:222.60000000000002px;top:154.2px;font-size:7.25px;line-height:10px;">Amount</div>
<div class="a s g" style="left:537px;top:154.2px;font-size:7.25px;line-height:10px;">Token</div>
<div class="a s g" style="right:42.700000000000045px;top:154.2px;font-size:7.25px;line-height:10px;">Value</div>
<svg class="a" style="left:735.9px;top:154.7px;" width="6.9" height="6.9" viewBox="0 0 10 10"><circle cx="5" cy="5" r="4.2" fill="none" stroke="#929daa" stroke-width="1.2"/><path d="M5 2.6V5.2H7" fill="none" stroke="#929daa" stroke-width="1.1"/></svg>
<div class="a s g" style="left:747.1px;top:154.2px;font-size:7.25px;line-height:10px;">Time</div>
<div class="hl" style="top:169px;background:#202a35"></div>
<div class="hl" style="top:170px;background:#131d28"></div>
<div class="hl" style="top:188px;background:#212b36"></div>
<div class="hl" style="top:221px;background:#1c2631"></div>
<div class="hl" style="top:222px;background:#17212c"></div>
<div class="hl" style="top:240px;background:#1a242e"></div>
<div class="hl" style="top:241px;background:#1a242e"></div>
<div class="hl" style="top:273px;background:#1f2934"></div>
<div class="hl" style="top:274px;background:#141e29"></div>
<div class="hl" style="top:352px;background:#1c2631"></div>
<div class="hl" style="top:353px;background:#17212c"></div>
<div class="a m b" style="left:73.0px;top:176.2px">Libra: Deployer [DefcyKc4]</div>
<div class="a m g" style="left:276.3px;top:176.2px">SOL Millionaire [FKp1tEiy]</div>
<div class="a m r" style="right:222.6px;top:176.2px">-127.87K</div>
<svg class="ic" style="left:536.6px;top:173.9px" viewBox="0 0 20 20"><circle cx="10" cy="10" r="10" fill="#04060a"/><path d="M5.400 4.900h10.600l-1.600 2.400h-10.600z" fill="url(#s1)"/><path d="M3.800 8.800h10.600l1.600 2.400h-10.600z" fill="url(#s2)"/><path d="M5.400 12.700h10.600l-1.600 2.400h-10.600z" fill="url(#s3)"/></svg>
<div class="a m b" style="left:551.9px;top:176.2px">SOL</div>
<div class="a m b" style="right:82.9px;top:176.2px">-$17.61M</div>
<div class="a m b" style="left:73.0px;top:194.2px">Libra: Deployer [DefcyKc4]</div>
<div class="a m g" style="left:276.3px;top:194.2px">SOL Millionaire [FKp1tEiy]</div>
<div class="a m r" style="right:222.6px;top:194.2px">-54.29M</div>
<svg class="ic" style="left:536.6px;top:192.1px" viewBox="0 0 20 20"><circle cx="10" cy="10" r="10" fill="#05070a"/><circle cx="10" cy="10" r="8.200" fill="none" stroke="#161a20" stroke-width="1.200"/><path d="M7.300 4.500v11M12.700 4.500v11M7.300 10h5.400M10 3v14" fill="none" stroke="#1d2329" stroke-width="1.300"/></svg>
<div class="a m b" style="left:551.9px;top:194.2px">LIBRA</div>
<div class="a m b" style="right:82.9px;top:194.2px">-$89.11K</div>
<div class="a m b" style="left:73.0px;top:209.2px">Libra: Deployer [DefcyKc4]</div>
<div class="a m g" style="left:276.3px;top:209.2px">SOL Millionaire [FKp1tEiy]</div>
<div class="a m r" style="right:222.6px;top:209.2px">-0.00204</div>
<svg class="ic" style="left:536.6px;top:207.7px" viewBox="0 0 20 20"><circle cx="10" cy="10" r="10" fill="#04060a"/><path d="M5.400 4.900h10.600l-1.600 2.400h-10.600z" fill="url(#s1)"/><path d="M3.800 8.800h10.600l1.600 2.400h-10.600z" fill="url(#s2)"/><path d="M5.400 12.700h10.600l-1.600 2.400h-10.600z" fill="url(#s3)"/></svg>
<div class="a m b" style="left:551.9px;top:210.2px">SOL</div>
<div class="a m b" style="right:82.9px;top:209.2px">-$0.281</div>
<div class="a m b" style="left:73.0px;top:228.2px">Libra: Deployer [DefcyKc4]</div>
<div class="a m g" style="left:276.3px;top:228.2px">SOL Millionaire [FKp1tEiy]</div>
<div class="a m r" style="right:222.6px;top:228.2px">-1.00</div>
<svg class="ic" style="left:536.6px;top:226.2px" viewBox="0 0 20 20"><circle cx="10" cy="10" r="10" fill="#04060a"/><path d="M5.400 4.900h10.600l-1.600 2.400h-10.600z" fill="url(#s1)"/><path d="M3.800 8.800h10.600l1.600 2.400h-10.600z" fill="url(#s2)"/><path d="M5.400 12.700h10.600l-1.600 2.400h-10.600z" fill="url(#s3)"/></svg>
<div class="a m b" style="left:551.9px;top:228.2px">SOL</div>
<div class="a m b" style="right:82.9px;top:228.2px">-$137.68</div>
<div class="a m g" style="left:73.0px;top:247.2px">Top 100 on POPCAT Leaderboard [Cr…</div>
<div class="a m b" style="left:276.3px;top:247.2px">Libra: Deployer [DefcyKc4]</div>
<div class="a m gr" style="right:222.6px;top:247.2px">3.75K</div>
<svg class="ic" style="left:536.6px;top:244.1px" viewBox="0 0 20 20"><circle cx="10" cy="10" r="10" fill="#04060a"/><path d="M5.400 4.900h10.600l-1.600 2.400h-10.600z" fill="url(#s1)"/><path d="M3.800 8.800h10.600l1.600 2.400h-10.600z" fill="url(#s2)"/><path d="M5.400 12.700h10.600l-1.600 2.400h-10.600z" fill="url(#s3)"/></svg>
<div class="a m b" style="left:551.9px;top:246.2px">SOL</div>
<div class="a m b" style="right:82.9px;top:247.2px">$515.79K</div>
<div class="a m b" style="left:73.0px;top:261.2px">Libra: Deployer [DefcyKc4]</div>
<div class="a m g" style="left:276.3px;top:261.2px">Top 100 on POPCAT Leaderboard [Cr…</div>
<div class="a m r" style="right:222.6px;top:261.2px">-500.46K</div>
<svg class="ic" style="left:536.4px;top:259.7px;width:11.2px;height:11.2px" viewBox="0 0 20 20"><circle cx="10" cy="10" r="10" fill="#2d7fe6"/><path d="M7.700 4.200A6.300 6.300 0 0 0 7.700 15.800M12.300 4.200A6.300 6.300 0 0 1 12.300 15.800" fill="none" stroke="#d4e6fb" stroke-width="1.500" stroke-linecap="round"/><path d="M12 8.100c-.3-.9-1-1.300-2-1.300s-2 .5-2 1.600c0 2.100 4.100 1.100 4.100 3.200 0 1.100-1 1.600-2.100 1.600s-1.900-.4-2.200-1.400M10 5.500v9" fill="none" stroke="#d4e6fb" stroke-width="1.300"/></svg>
<div class="a m b" style="left:551.9px;top:262.2px">USDC</div>
<div class="a m b" style="right:82.9px;top:261.2px">-$500.31K</div>
<svg class="a" style="left:74.4px;top:280.2px" width="7.6" height="7.6" viewBox="0 0 20 20"><rect x="8.800" y="0" width="2.400" height="4.500" rx="1" fill="#b7dffa"/><rect x="0.500" y="3.800" width="19" height="15.700" rx="5.500" fill="#b7dffa"/><rect x="4.300" y="9.200" width="11.400" height="3.600" rx="1.800" fill="#3f5f7d"/></svg>
<div class="a m g" style="left:87.0px;top:281.2px">DEX Trading Bot [8ekCy2jH]</div>
<div class="a m b" style="left:276.3px;top:280.2px">Libra: Deployer [DefcyKc4]</div>
<div class="a m gr" style="right:222.6px;top:280.2px">1.95K</div>
<svg class="ic" style="left:536.6px;top:277.3px" viewBox="0 0 20 20"><circle cx="10" cy="10" r="10" fill="#04060a"/><path d="M5.400 4.900h10.600l-1.600 2.400h-10.600z" fill="url(#s1)"/><path d="M3.800 8.800h10.600l1.600 2.400h-10.600z" fill="url(#s2)"/><path d="M5.400 12.700h10.600l-1.600 2.400h-10.600z" fill="url(#s3)"/></svg>
<div class="a m b" style="left:551.9px;top:279.2px">SOL</div>
<div class="a m b" style="right:82.9px;top:280.2px">$267.92K</div>
<div class="a m b" style="left:73.0px;top:296.2px">Libra: Deployer [DefcyKc4]</div>
<svg class="a" style="left:277.7px;top:295.1px" width="7.6" height="7.6" viewBox="0 0 20 20"><rect x="8.800" y="0" width="2.400" height="4.500" rx="1" fill="#b7dffa"/><rect x="0.500" y="3.800" width="19" height="15.700" rx="5.500" fill="#b7dffa"/><rect x="4.300" y="9.200" width="11.400" height="3.600" rx="1.800" fill="#3f5f7d"/></svg>
<div class="a m g" style="left:290.3px;top:296.2px">DEX Trading Bot [8ekCy2jH]</div>
<div class="a m r" style="right:222.6px;top:295.2px">-260.00K</div>
<svg class="ic" style="left:536.4px;top:292.6px;width:11.2px;height:11.2px" viewBox="0 0 20 20"><circle cx="10" cy="10" r="10" fill="#2d7fe6"/><path d="M7.700 4.200A6.300 6.300 0 0 0 7.700 15.800M12.300 4.200A6.300 6.300 0 0 1 12.300 15.800" fill="none" stroke="#d4e6fb" stroke-width="1.500" stroke-linecap="round"/><path d="M12 8.100c-.3-.9-1-1.300-2-1.300s-2 .5-2 1.600c0 2.100 4.100 1.100 4.100 3.200 0 1.100-1 1.600-2.100 1.600s-1.900-.4-2.200-1.400M10 5.500v9" fill="none" stroke="#d4e6fb" stroke-width="1.300"/></svg>
<div class="a m b" style="left:551.9px;top:295.2px">USDC</div>
<div class="a m b" style="right:82.9px;top:295.2px">-$259.92K</div>
<div class="a m g" style="left:73.0px;top:310.2px">High Balance [4ynTYgJK]</div>
<div class="a m b" style="left:276.3px;top:310.2px">Libra: Deployer [DefcyKc4]</div>
<div class="a m gr" style="right:222.6px;top:310.2px">898.01</div>
<svg class="ic" style="left:536.6px;top:308.3px" viewBox="0 0 20 20"><circle cx="10" cy="10" r="10" fill="#04060a"/><path d="M5.400 4.900h10.600l-1.600 2.400h-10.600z" fill="url(#s1)"/><path d="M3.800 8.800h10.600l1.600 2.400h-10.600z" fill="url(#s2)"/><path d="M5.400 12.700h10.600l-1.600 2.400h-10.600z" fill="url(#s3)"/></svg>
<div class="a m b" style="left:551.9px;top:310.2px">SOL</div>
<div class="a m b" style="right:82.9px;top:310.2px">$123.64K</div>
<div class="a m g" style="left:73.0px;top:325.2px">High Balance [4uWuh9fC]</div>
<div class="a m b" style="left:276.3px;top:325.2px">Libra: Deployer [DefcyKc4]</div>
<div class="a m gr" style="right:222.6px;top:324.2px">897.97</div>
<svg class="ic" style="left:536.6px;top:323.9px" viewBox="0 0 20 20"><circle cx="10" cy="10" r="10" fill="#04060a"/><path d="M5.400 4.900h10.600l-1.600 2.400h-10.600z" fill="url(#s1)"/><path d="M3.800 8.800h10.600l1.600 2.400h-10.600z" fill="url(#s2)"/><path d="M5.400 12.700h10.600l-1.600 2.400h-10.600z" fill="url(#s3)"/></svg>
<div class="a m b" style="left:551.9px;top:326.2px">SOL</div>
<div class="a m b" style="right:82.9px;top:324.2px">$123.63K</div>
<div class="a m g" style="left:73.0px;top:359.2px">SOL Millionaire [FksffEqn]</div>
<div class="a m b" style="left:276.3px;top:359.2px">Libra: Deployer [DefcyKc4]</div>
<div class="a m gr" style="right:222.6px;top:359.2px">2.21K</div>
<svg class="ic" style="left:536.6px;top:356.3px" viewBox="0 0 20 20"><circle cx="10" cy="10" r="10" fill="#04060a"/><path d="M5.400 4.900h10.600l-1.600 2.400h-10.600z" fill="url(#s1)"/><path d="M3.800 8.800h10.600l1.600 2.400h-10.600z" fill="url(#s2)"/><path d="M5.400 12.700h10.600l-1.600 2.400h-10.600z" fill="url(#s3)"/></svg>
<div class="a m b" style="left:551.9px;top:358.2px">SOL</div>
<div class="a m b" style="right:82.9px;top:359.2px">$303.81K</div>
<div class="a m b" style="left:73.0px;top:374.2px">Libra: Deployer [DefcyKc4]</div>
<div class="a m g" style="left:276.3px;top:374.2px">SOL Millionaire [FksffEqn]</div>
<div class="a m r" style="right:222.6px;top:374.2px">-295.00K</div>
<svg class="ic" style="left:536.4px;top:371.7px;width:11.2px;height:11.2px" viewBox="0 0 20 20"><circle cx="10" cy="10" r="10" fill="#2d7fe6"/><path d="M7.700 4.200A6.300 6.300 0 0 0 7.700 15.800M12.300 4.200A6.300 6.300 0 0 1 12.300 15.800" fill="none" stroke="#d4e6fb" stroke-width="1.500" stroke-linecap="round"/><path d="M12 8.100c-.3-.9-1-1.300-2-1.300s-2 .5-2 1.600c0 2.100 4.100 1.100 4.100 3.200 0 1.100-1 1.600-2.100 1.600s-1.900-.4-2.200-1.400M10 5.500v9" fill="none" stroke="#d4e6fb" stroke-width="1.300"/></svg>
<div class="a m b" style="left:551.9px;top:374.2px">USDC</div>
<div class="a m b" style="right:82.9px;top:374.2px">-$294.91K</div>
<svg class="a" style="left:74.4px;top:388.5px" width="7.6" height="7.6" viewBox="0 0 20 20"><rect x="8.800" y="0" width="2.400" height="4.500" rx="1" fill="#b7dffa"/><rect x="0.500" y="3.800" width="19" height="15.700" rx="5.500" fill="#b7dffa"/><rect x="4.300" y="9.200" width="11.400" height="3.600" rx="1.800" fill="#3f5f7d"/></svg>
<div class="a m g" style="left:87.0px;top:389.2px">DEX Trading Bot [8ekCy2jH]</div>
<div class="a m b" style="left:276.3px;top:389.2px">Libra: Deployer [DefcyKc4]</div>
<div class="a m gr" style="right:222.6px;top:389.2px">860.57</div>
<svg class="ic" style="left:536.6px;top:387.3px" viewBox="0 0 20 20"><circle cx="10" cy="10" r="10" fill="#04060a"/><path d="M5.400 4.900h10.600l-1.600 2.400h-10.600z" fill="url(#s1)"/><path d="M3.800 8.800h10.600l1.600 2.400h-10.600z" fill="url(#s2)"/><path d="M5.400 12.700h10.600l-1.600 2.400h-10.600z" fill="url(#s3)"/></svg>
<div class="a m b" style="left:551.9px;top:389.2px">SOL</div>
<div class="a m b" style="right:82.9px;top:389.2px">$118.48K</div>
<div class="a m b" style="left:73.0px;top:404.2px">Libra: Deployer [DefcyKc4]</div>
<svg class="a" style="left:277.7px;top:402.9px" width="7.6" height="7.6" viewBox="0 0 20 20"><rect x="8.800" y="0" width="2.400" height="4.500" rx="1" fill="#b7dffa"/><rect x="0.500" y="3.800" width="19" height="15.700" rx="5.500" fill="#b7dffa"/><rect x="4.300" y="9.200" width="11.400" height="3.600" rx="1.800" fill="#3f5f7d"/></svg>
<div class="a m g" style="left:290.3px;top:404.2px">DEX Trading Bot [8ekCy2jH]</div>
<div class="a m r" style="right:222.6px;top:404.2px">-115.00K</div>
<svg class="ic" style="left:536.4px;top:402.5px;width:11.2px;height:11.2px" viewBox="0 0 20 20"><circle cx="10" cy="10" r="10" fill="#2d7fe6"/><path d="M7.700 4.200A6.300 6.300 0 0 0 7.700 15.800M12.300 4.200A6.300 6.300 0 0 1 12.300 15.800" fill="none" stroke="#d4e6fb" stroke-width="1.500" stroke-linecap="round"/><path d="M12 8.100c-.3-.9-1-1.300-2-1.300s-2 .5-2 1.600c0 2.100 4.100 1.100 4.100 3.200 0 1.100-1 1.600-2.100 1.600s-1.900-.4-2.200-1.400M10 5.500v9" fill="none" stroke="#d4e6fb" stroke-width="1.300"/></svg>
<div class="a m b" style="left:551.9px;top:405.2px">USDC</div>
<div class="a m b" style="right:82.9px;top:404.2px">-$114.97K</div>
<svg class="a" style="left:0;top:0" width="750" height="430" viewBox="0 0 750 430"><rect x="671.5" y="178.40" width="35.6" height="2.4" rx="1.2" fill="#f2616b"/><rect x="672.5" y="179.20" width="33.600" height="0.800" rx="0.400" fill="#fcc3c3"/><rect x="671.5" y="197.25" width="35.6" height="1.900" rx="0.950" fill="#97453f"/><rect x="671.5" y="197.25" width="1.800" height="1.900" rx="0.900" fill="#ee6e6c"/><rect x="671.5" y="212.05" width="35.6" height="1.900" rx="0.950" fill="#97453f"/><rect x="671.5" y="212.05" width="1.800" height="1.900" rx="0.900" fill="#ee6e6c"/><rect x="671.5" y="230.95" width="35.6" height="1.900" rx="0.950" fill="#97453f"/><rect x="671.5" y="230.95" width="1.800" height="1.900" rx="0.900" fill="#ee6e6c"/><rect x="671.5" y="249.55" width="35.6" height="1.900" rx="0.950" fill="#1d8650"/><rect x="671.5" y="249.55" width="1.800" height="1.900" rx="0.900" fill="#27c672"/><rect x="671.5" y="264.05" width="35.6" height="1.900" rx="0.950" fill="#97453f"/><rect x="671.5" y="264.05" width="1.800" height="1.900" rx="0.900" fill="#ee6e6c"/><rect x="671.5" y="283.25" width="35.6" height="1.900" rx="0.950" fill="#1d8650"/><rect x="671.5" y="283.25" width="1.800" height="1.900" rx="0.900" fill="#27c672"/><rect x="671.5" y="297.95" width="35.6" height="1.900" rx="0.950" fill="#97453f"/><rect x="671.5" y="297.95" width="1.800" height="1.900" rx="0.900" fill="#ee6e6c"/><rect x="671.5" y="312.25" width="35.6" height="1.900" rx="0.950" fill="#1d8650"/><rect x="671.5" y="312.25" width="1.800" height="1.900" rx="0.900" fill="#27c672"/><rect x="671.5" y="326.75" width="35.6" height="1.900" rx="0.950" fill="#1d8650"/><rect x="671.5" y="326.75" width="1.800" height="1.900" rx="0.900" fill="#27c672"/><rect x="671.5" y="362.05" width="35.6" height="1.900" rx="0.950" fill="#1d8650"/><rect x="671.5" y="362.05" width="1.800" height="1.900" rx="0.900" fill="#27c672"/><rect x="671.5" y="376.85" width="35.6" height="1.900" rx="0.950" fill="#97453f"/><rect x="671.5" y="376.85" width="1.800" height="1.900" rx="0.900" fill="#ee6e6c"/><rect x="671.5" y="391.75" width="35.6" height="1.900" rx="0.950" fill="#1d8650"/><rect x="671.5" y="391.75" width="1.800" height="1.900" rx="0.900" fill="#27c672"/><rect x="671.5" y="406.25" width="35.6" height="1.900" rx="0.950" fill="#97453f"/><rect x="671.5" y="406.25" width="1.800" height="1.900" rx="0.900" fill="#ee6e6c"/></svg>
<div class="a s b t1" style="left:73px;top:337.0px;font-size:7.4px;line-height:10px;letter-spacing:0.07px;">View 3 more</div>
<svg class="a" style="left:121.6px;top:339.5px" width="4" height="5.6" viewBox="0 0 5 7"><path d="M1 0.700L4 3.500L1 6.300" fill="none" stroke="#d3d8de" stroke-width="1.350"/></svg>
<div class="a s b t1" style="left:73px;top:416.9px;font-size:7.4px;line-height:10px;letter-spacing:0.07px;">View 3 more</div>
<svg class="a" style="left:121.6px;top:418.4px" width="4" height="5.6" viewBox="0 0 5 7"><path d="M1 0.700L4 3.500L1 6.300" fill="none" stroke="#d3d8de" stroke-width="1.350"/></svg>
<div class="a m b" style="left:744.6px;top:176.2px">5h ago</div>
<div class="a m b" style="left:744.6px;top:202.2px">5h ago</div>
<div class="a m b" style="left:744.6px;top:228.2px">5h ago</div>
<div class="a m b" style="left:744.6px;top:254.2px">5h ago</div>
<div class="a m b" style="left:744.6px;top:302.2px">5h ago</div>
<div class="a m b" style="left:744.6px;top:381.2px">5h ago</div>
<div class="tag" style="top:174.6px;right:748.5px;line-height:10.4px;">&nbsp;</div>
<div class="tag" style="top:200.4px;right:711.6px;line-height:14.4px;">Transferchecked</div>
<div class="tag" style="top:226.7px;right:748.5px;line-height:10.4px;">&nbsp;</div>
<div class="tag" style="top:252.2px;right:737.1px;line-height:14.4px;">Transfer</div>
<div class="tag" style="top:300.9px;right:737.1px;line-height:14.4px;">Transfer</div>
<div class="tag" style="top:380.1px;right:737.1px;line-height:14.4px;">Transfer</div>
</div></body></html>
